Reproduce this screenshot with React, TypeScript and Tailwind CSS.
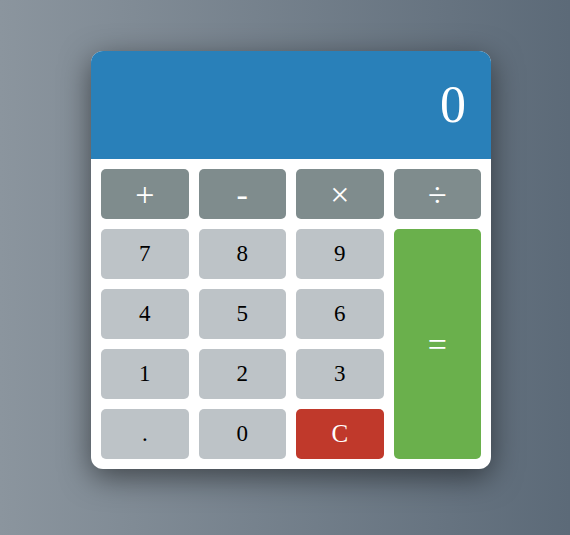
import React from "react";

const serif = { fontFamily: '"Liberation Serif", "Times New Roman", serif' };

function Btn({ label, cls }: { label: string; cls: string }) {
  return (
    <button
      className={`flex items-center justify-center rounded-[5px] h-[50px] ${cls}`}
      style={serif}
    >
      {label}
    </button>
  );
}

export default function App() {
  const op = "bg-[#7f8c8d] text-white text-[34px] font-light";
  const num = "bg-[#bdc3c7] text-black text-[23px]";
  return (
    <div className="w-[570px] h-[535px] bg-[linear-gradient(to_right,#8b959e,#5c6a78)] pt-[51px] pl-[91px]">
      <div className="w-[400px] rounded-[12px] bg-white overflow-hidden shadow-[0_8px_30px_rgba(0,0,0,0.5)]">
        <div
          className="h-[108px] bg-[#2980b9] text-white flex items-center justify-end pr-[25px] text-[52px]"
          style={serif}
        >
          0
        </div>
        <div className="grid grid-cols-4 grid-rows-[repeat(5,50px)] gap-[10px] p-[10px]">
          <Btn label="+" cls={op} />
          <Btn label="-" cls={op} />
          <Btn label="×" cls={op} />
          <Btn label="÷" cls={op} />
          <Btn label="7" cls={num} />
          <Btn label="8" cls={num} />
          <Btn label="9" cls={num} />
          <button
            className="row-span-4 flex items-center justify-center rounded-[5px] bg-[#6ab04c] text-white text-[34px]"
            style={serif}
          >
            =
          </button>
          <Btn label="4" cls={num} />
          <Btn label="5" cls={num} />
          <Btn label="6" cls={num} />
          <Btn label="1" cls={num} />
          <Btn label="2" cls={num} />
          <Btn label="3" cls={num} />
          <Btn label="." cls={num} />
          <Btn label="0" cls={num} />
          <Btn label="C" cls="bg-[#c0392b] text-white text-[25px]" />
        </div>
      </div>
    </div>
  );
}
